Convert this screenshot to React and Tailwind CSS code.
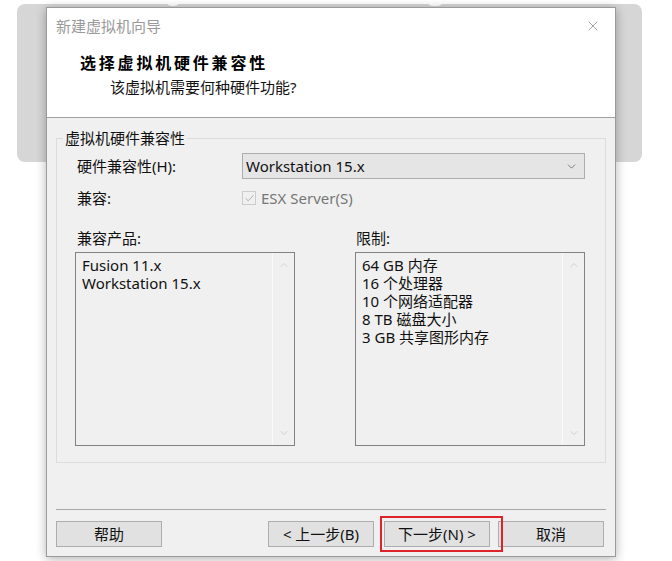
import { Check, ChevronDown, ChevronUp, X } from 'lucide-react';

const font = "font-['Segoe_UI','Noto_Sans','Noto_Sans_CJK_SC',sans-serif]";

const products = ['Fusion 11.x', 'Workstation 15.x'];
const limits = ['64 GB 内存', '16 个处理器', '10 个网络适配器', '8 TB 磁盘大小', '3 GB 共享图形内存'];

function ListBox({ items, width }) {
  return (
    <div className={`flex h-[194px] border border-[#828282] bg-[#f0f0f0] ${width}`}>
      <div className="flex-1 px-[6px] pt-[3px] text-[15px] leading-[18px] text-[#111]">
        {items.map((item) => (
          <div key={item} className="h-[18px]">{item}</div>
        ))}
      </div>
      {/* scrollbar */}
      <div className="flex w-[22px] flex-col items-center justify-between border-l border-[#fafafa] py-[6px]">
        <ChevronUp className="h-[12px] w-[12px] text-[#c4c4c4]" strokeWidth={1.5} />
        <ChevronDown className="h-[12px] w-[12px] text-[#c4c4c4]" strokeWidth={1.5} />
      </div>
    </div>
  );
}

function Button({ children }) {
  return (
    <button className="flex h-[26px] w-[106px] items-center justify-center border border-[#adadad] bg-[#e1e1e1] text-[15px] text-[#111]">
      {children}
    </button>
  );
}

export default function App() {
  return (
    <div className={`relative h-[561px] w-[672px] overflow-hidden bg-white ${font}`}>
      {/* Window behind the dialog */}
      <div className="absolute left-[17px] top-[4px] h-[158px] w-[625px] rounded-[8px] bg-[#d6d6d6]" />
      <div className="absolute left-[166px] top-0 h-[6px] w-[14px] rounded-b-[6px] bg-white" />
      <div className="absolute left-[427px] top-0 h-[6px] w-[16px] rounded-b-[6px] bg-white" />

      {/* Dialog */}
      <div className="relative ml-[46px] mt-[7px] flex h-[550px] w-[570px] flex-col border border-[#9a9a9a] bg-[#f0f0f0] shadow-[0_2px_10px_rgba(0,0,0,0.3)]">
        {/* Header */}
        <div className="flex h-[110px] flex-col border-b border-[#a0a0a0] bg-white">
          <div className="flex h-[36px] items-center justify-between pl-[9px] pr-[14px] text-[15px] text-[#9a9a9a]">
            <span>新建虚拟机向导</span>
            <X className="h-[16px] w-[16px] text-[#777]" strokeWidth={1} />
          </div>
          <div className="mt-[9px] pl-[33px] text-[16px] font-bold leading-[20px] tracking-[2.8px] text-black">
            选择虚拟机硬件兼容性
          </div>
          <div className="mt-[4px] pl-[63px] text-[15px] leading-[20px] text-[#111]">
            该虚拟机需要何种硬件功能?
          </div>
        </div>

        {/* Body */}
        <div className="flex flex-1 flex-col px-[9px] pt-[10px]">
          <fieldset className="h-[335px] border border-[#dcdcdc]">
            <legend className="ml-[6px] px-[2px] text-[15px] leading-[20px] text-[#111]">虚拟机硬件兼容性</legend>

            <div className="pl-[18px] pr-[18px]">
              <div className="mt-[5px] flex h-[26px] items-center text-[15px] text-[#111]">
                <span className="w-[167px] pl-[2px]">硬件兼容性(H):</span>
                <div className="flex h-[26px] w-[343px] items-center justify-between border border-[#adadad] bg-[#e5e5e5] pl-[3px] pr-[6px]">
                  <span>Workstation 15.x</span>
                  <ChevronDown className="h-[13px] w-[13px] text-[#444]" strokeWidth={1.2} />
                </div>
              </div>

              <div className="mt-[6px] flex h-[26px] items-center text-[15px]">
                <span className="w-[167px] pl-[2px] text-[#111]">兼容:</span>
                <span className="flex h-[14px] w-[14px] items-center justify-center border border-[#cccccc] bg-[#f0f0f0]">
                  <Check className="h-[11px] w-[11px] text-[#a8a8a8]" strokeWidth={2} />
                </span>
                <span className="ml-[5px] text-[#777]">ESX Server(S)</span>
              </div>

              <div className="mt-[15px] flex h-[24px] items-center text-[15px] text-[#111]">
                <span className="w-[280px] pl-[2px]">兼容产品:</span>
                <span className="pl-[1px]">限制:</span>
              </div>

              <div className="mt-[2px] flex gap-[60px]">
                <ListBox items={products} width="w-[220px]" />
                <ListBox items={limits} width="w-[230px]" />
              </div>
            </div>
          </fieldset>

          <div className="mt-[46px] border-t border-[#a8a8a8]" />

          {/* Footer buttons */}
          <div className="mt-[11px] flex items-center">
            <Button>帮助</Button>
            <div className="ml-auto flex items-center">
              <Button>&lt; 上一步(B)</Button>
              <div className="relative ml-[10px]">
                <Button>下一步(N) &gt;</Button>
                <div className="absolute -left-[4px] -top-[5px] h-[36px] w-[123px] border-2 border-[#e0232b]" />
              </div>
              <div className="ml-[8px] mr-[2px]">
                <Button>取消</Button>
              </div>
            </div>
          </div>
        </div>
      </div>
    </div>
  );
}
